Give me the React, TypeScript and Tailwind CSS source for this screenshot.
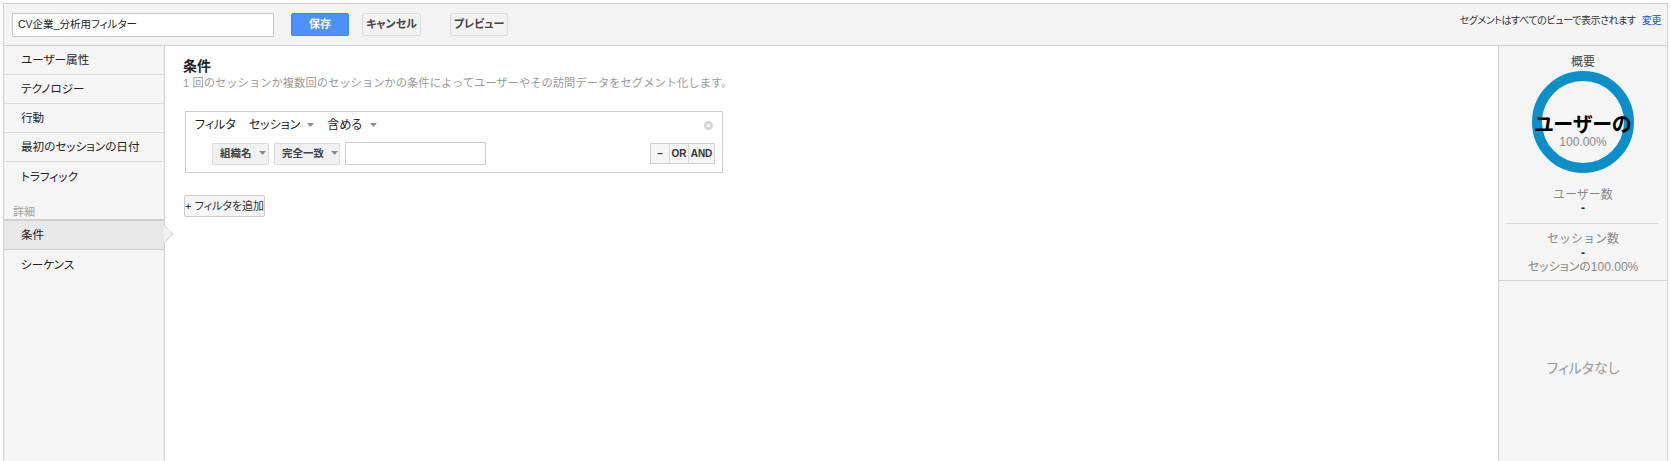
import React from "react";

function Caret() {
  return (
    <svg width="7" height="4" viewBox="0 0 7 4" className="inline-block">
      <polygon points="0,0 7,0 3.5,4" fill="#8a8a8a" />
    </svg>
  );
}

function SideRow({ label, border = true }: { label: string; border?: boolean }) {
  return (
    <div
      className={
        "h-[29px] flex items-center pl-[17px] text-[11.6px] text-[#222] [font-feature-settings:'palt'] " +
        (border ? "border-b border-[#dadada]" : "")
      }
    >
      {label}
    </div>
  );
}

export default function App() {
  return (
    <div className="w-[1671px] h-[461px] overflow-hidden bg-white font-['Liberation_Sans','Noto_Sans_CJK_JP',sans-serif] text-[#333]">
      <div className="ml-[3px] mt-[3px] w-[1665px] h-[458px] border border-b-0 border-[#cfcfcf] flex flex-col">
        {/* top bar */}
        <div className="h-[42px] shrink-0 bg-[#f4f4f4] border-b border-[#cfcfcf] flex items-center pl-[8px] pr-[6px]">
          <div className="w-[262px] h-[24px] bg-white border border-[#c8c8c8] flex items-center pl-[5px] text-[10.5px] text-[#222] [font-feature-settings:'palt']">
            CV企業_分析用フィルター
          </div>
          <button className="ml-[17px] w-[58px] h-[23px] rounded-[2px] bg-[#4d90fe] border border-[#3f84f0] text-white text-[11px] font-bold">
            保存
          </button>
          <button className="ml-[13px] w-[59px] h-[23px] rounded-[2px] bg-[#f3f3f3] border border-[#dcdcdc] text-[#444] text-[11px] font-bold [font-feature-settings:'palt']">
            キャンセル
          </button>
          <button className="ml-[29px] w-[58px] h-[23px] rounded-[2px] bg-[#f3f3f3] border border-[#dcdcdc] text-[#444] text-[11px] font-bold [font-feature-settings:'palt']">
            プレビュー
          </button>
          <div className="ml-auto text-[10px] tracking-[-0.4px] text-[#333] [font-feature-settings:'palt'] mb-[8px]">
            セグメントはすべてのビューで表示されます
            <span className="ml-[6px] text-[#1155cc]">変更</span>
          </div>
        </div>

        {/* body */}
        <div className="flex flex-1 min-h-0">
          {/* sidebar */}
          <div className="relative w-[161px] shrink-0 bg-[#f5f5f5] border-r border-[#cfcfcf]">
            <SideRow label="ユーザー属性" />
            <SideRow label="テクノロジー" />
            <SideRow label="行動" />
            <SideRow label="最初のセッションの日付" />
            <SideRow label="トラフィック" border={false} />
            <div className="h-[28px] flex items-end pl-[9px] text-[11px] leading-[13px] text-[#a0a0a0]">詳細</div>
            <div className="h-[31px] flex items-center pl-[17px] text-[11.6px] text-[#222] bg-[#e8e8e8] border-t-2 border-b border-[#d0d0d0]">
              条件
            </div>
            <SideRow label="シーケンス" border={false} />
            <svg
              width="10"
              height="18"
              viewBox="0 0 10 18"
              className="absolute left-[160px] top-[179px]"
            >
              <polygon points="0,0 9,9 0,18" fill="#f2f2f2" />
              <polyline points="0,0 9,9 0,18" fill="none" stroke="#d6d6d6" strokeWidth="1" />
            </svg>
          </div>

          {/* main */}
          <div className="flex-1 bg-white pl-[18px] pt-[11px]">
            <div className="text-[14px] leading-[18px] font-bold text-[#222]">条件</div>
            <div className="text-[11.3px] leading-[16px] text-[#999]">
              1 回のセッションか複数回のセッションかの条件によってユーザーやその訪問データをセグメント化します。
            </div>

            <div className="relative mt-[20px] ml-[2px] w-[538px] h-[62px] border border-[#cccccc]">
              <div className="h-[26px] flex items-center pl-[9px] text-[12px] text-[#222] [font-feature-settings:'palt']">
                <span>フィルタ</span>
                <span className="ml-[13px]">セッション</span>
                <span className="ml-[7px] mb-[2px]"><Caret /></span>
                <span className="ml-[13px]">含める</span>
                <span className="ml-[8px] mb-[2px]"><Caret /></span>
              </div>
              <svg width="9" height="9" viewBox="0 0 9 9" className="absolute right-[9px] top-[9px]">
                <circle cx="4.5" cy="4.5" r="4.5" fill="#d4d4d4" />
                <path d="M2.8 2.8 L6.2 6.2 M6.2 2.8 L2.8 6.2" stroke="#fff" strokeWidth="1.2" />
              </svg>
              <div className="mt-[4px] flex items-center pl-[26px] pr-[7px]">
                <div className="w-[57px] h-[22px] bg-[#f1f1f1] border border-[#dcdcdc] rounded-[1px] flex items-center pl-[7px] text-[10.5px] font-bold text-[#444] whitespace-nowrap">
                  <span>組織名</span>
                  <span className="ml-[7px] mb-[1px] flex"><Caret /></span>
                </div>
                <div className="ml-[5px] w-[66px] h-[22px] bg-[#f1f1f1] border border-[#dcdcdc] rounded-[1px] flex items-center pl-[7px] text-[10.5px] font-bold text-[#444] whitespace-nowrap">
                  <span>完全一致</span>
                  <span className="ml-[7px] mb-[1px] flex"><Caret /></span>
                </div>
                <div className="ml-[5px] w-[141px] h-[23px] bg-white border border-[#cccccc]" />
                <div className="ml-auto flex h-[21px] border border-[#cfcfcf] bg-[#f5f5f5] text-[10px] font-bold text-[#333]">
                  <div className="w-[19px] flex items-center justify-center border-r border-[#d8d8d8]">–</div>
                  <div className="w-[19px] flex items-center justify-center border-r border-[#d8d8d8]">OR</div>
                  <div className="w-[25px] flex items-center justify-center">AND</div>
                </div>
              </div>
            </div>

            <button className="mt-[22px] ml-[1px] w-[81px] h-[22px] rounded-[2px] bg-[#f5f5f5] border border-[#cccccc] text-[11px] text-[#333] [font-feature-settings:'palt']">
              + フィルタを追加
            </button>
          </div>

          {/* right panel */}
          <div className="w-[169px] shrink-0 bg-[#f5f5f5] border-l border-[#cfcfcf] flex flex-col">
            <div className="pt-[8px] text-center text-[12px] leading-[16px] text-[#444]">概要</div>
            <div className="relative mx-auto mt-[1px] w-[102px] h-[102px]">
              <svg width="102" height="102" viewBox="0 0 102 102" className="absolute left-0 top-0">
                <circle cx="51" cy="51" r="46" fill="none" stroke="#0a8fc9" strokeWidth="10" />
              </svg>
              <div className="absolute left-[-20px] right-[-20px] top-[42px] text-center text-[20px] leading-[24px] font-bold text-black [font-feature-settings:'palt']">
                ユーザーの
              </div>
              <div className="absolute left-0 right-0 top-[64px] text-center text-[12px] leading-[14px] text-[#888]">
                100.00%
              </div>
            </div>
            <div className="mt-[15px] text-center text-[12px] leading-[14px] text-[#888]">ユーザー数</div>
            <div className="text-center text-[12px] leading-[12px] font-bold text-[#222]">-</div>
            <div className="mt-[9px] mx-[8px] border-t border-[#d8d8d8]" />
            <div className="mt-[8px] text-center text-[12px] leading-[14px] text-[#888]">セッション数</div>
            <div className="text-center text-[12px] leading-[14px] font-bold text-[#222]">-</div>
            <div className="text-center text-[12px] leading-[14px] text-[#888] [font-feature-settings:'palt']">セッションの100.00%</div>
            <div className="mt-[6px] border-t border-[#d0d0d0]" />
            <div className="flex-1 flex items-start justify-center pt-[77px] text-[14px] text-[#999] [font-feature-settings:'palt']">
              フィルタなし
            </div>
          </div>
        </div>
      </div>
    </div>
  );
}
